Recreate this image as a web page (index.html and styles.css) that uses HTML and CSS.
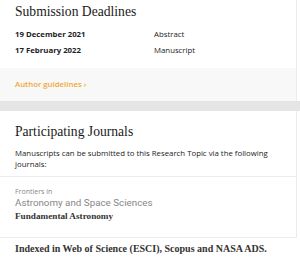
FILE: index.html
```html
<!DOCTYPE html>
<html lang="en">
<head>
  <meta charset="UTF-8">
  <meta name="viewport" content="width=device-width, initial-scale=1.0">
  <title>Research Topic</title>
  <link rel="stylesheet" href="styles.css">
</head>
<body>
  <div class="card">
    <div class="deadlines">
      <h2>Submission Deadlines</h2>
      <div class="row">
        <span class="date">19 December 2021</span>
        <span class="kind">Abstract</span>
      </div>
      <div class="row">
        <span class="date">17 February 2022</span>
        <span class="kind">Manuscript</span>
      </div>
    </div>
    <div class="guidelines">
      <a href="#">Author guidelines ›</a>
    </div>
  </div>

  <div class="band"></div>

  <div class="card journals">
    <h2>Participating Journals</h2>
    <p class="intro">Manuscripts can be submitted to this Research Topic via the following journals:</p>
    <div class="journal">
      <div class="frontiers">Frontiers in</div>
      <div class="field">Astronomy and Space Sciences</div>
      <div class="section">Fundamental Astronomy</div>
    </div>
  </div>
  <p class="indexed">Indexed in Web of Science (ESCI), Scopus and NASA ADS.</p>
</body>
</html>
```

FILE: styles.css
```css
* {
  margin: 0;
  padding: 0;
  box-sizing: border-box;
}
body {
  background: #fff;
  color: #222;
  font-family: "Open Sans", sans-serif;
  width: 300px;
  overflow: hidden;
}
h2 {
  font-family: "Liberation Serif", serif;
  font-weight: normal;
  font-size: 13.6px;
  line-height: 20px;
  color: #1a1a1a;
}
.card {
  width: 297px;
  border-right: 1px solid #ececec;
}
.deadlines {
  padding: 2px 15px 10px;
}
.deadlines h2 {
  margin-bottom: 4px;
}
.row {
  display: grid;
  grid-template-columns: 139px 1fr;
  font-size: 7.8px;
  line-height: 16px;
}
.date {
  font-weight: bold;
}
.guidelines {
  background: #f8f8f8;
  padding: 10px 15px 0;
  height: 33px;
  font-size: 7.8px;
  line-height: 12px;
}
.guidelines a {
  color: #f0a732;
  font-weight: 600;
  text-decoration: none;
}
.band {
  height: 10px;
  background: #e5e5e5;
}
.journals {
  padding-top: 11px;
  border-bottom: 1px solid #ececec;
}
.journals h2 {
  padding: 0 15px;
}
.intro {
  margin-top: 6px;
  padding: 0 15px 6px;
  font-size: 7.8px;
  line-height: 11px;
  border-bottom: 1px solid #ececec;
}
.journal {
  padding: 10px 15px 14px;
}
.frontiers {
  font-size: 7px;
  color: #888;
  line-height: 10px;
}
.field {
  font-family: "Roboto", sans-serif;
  font-size: 9.8px;
  color: #888;
  line-height: 12px;
}
.section {
  font-family: "Liberation Serif", serif;
  font-weight: bold;
  font-size: 9.2px;
  line-height: 14px;
  color: #333;
}
.indexed {
  font-family: "Liberation Serif", serif;
  font-weight: bold;
  font-size: 10px;
  line-height: 14px;
  padding: 4px 15px 0;
  color: #333;
}
```
